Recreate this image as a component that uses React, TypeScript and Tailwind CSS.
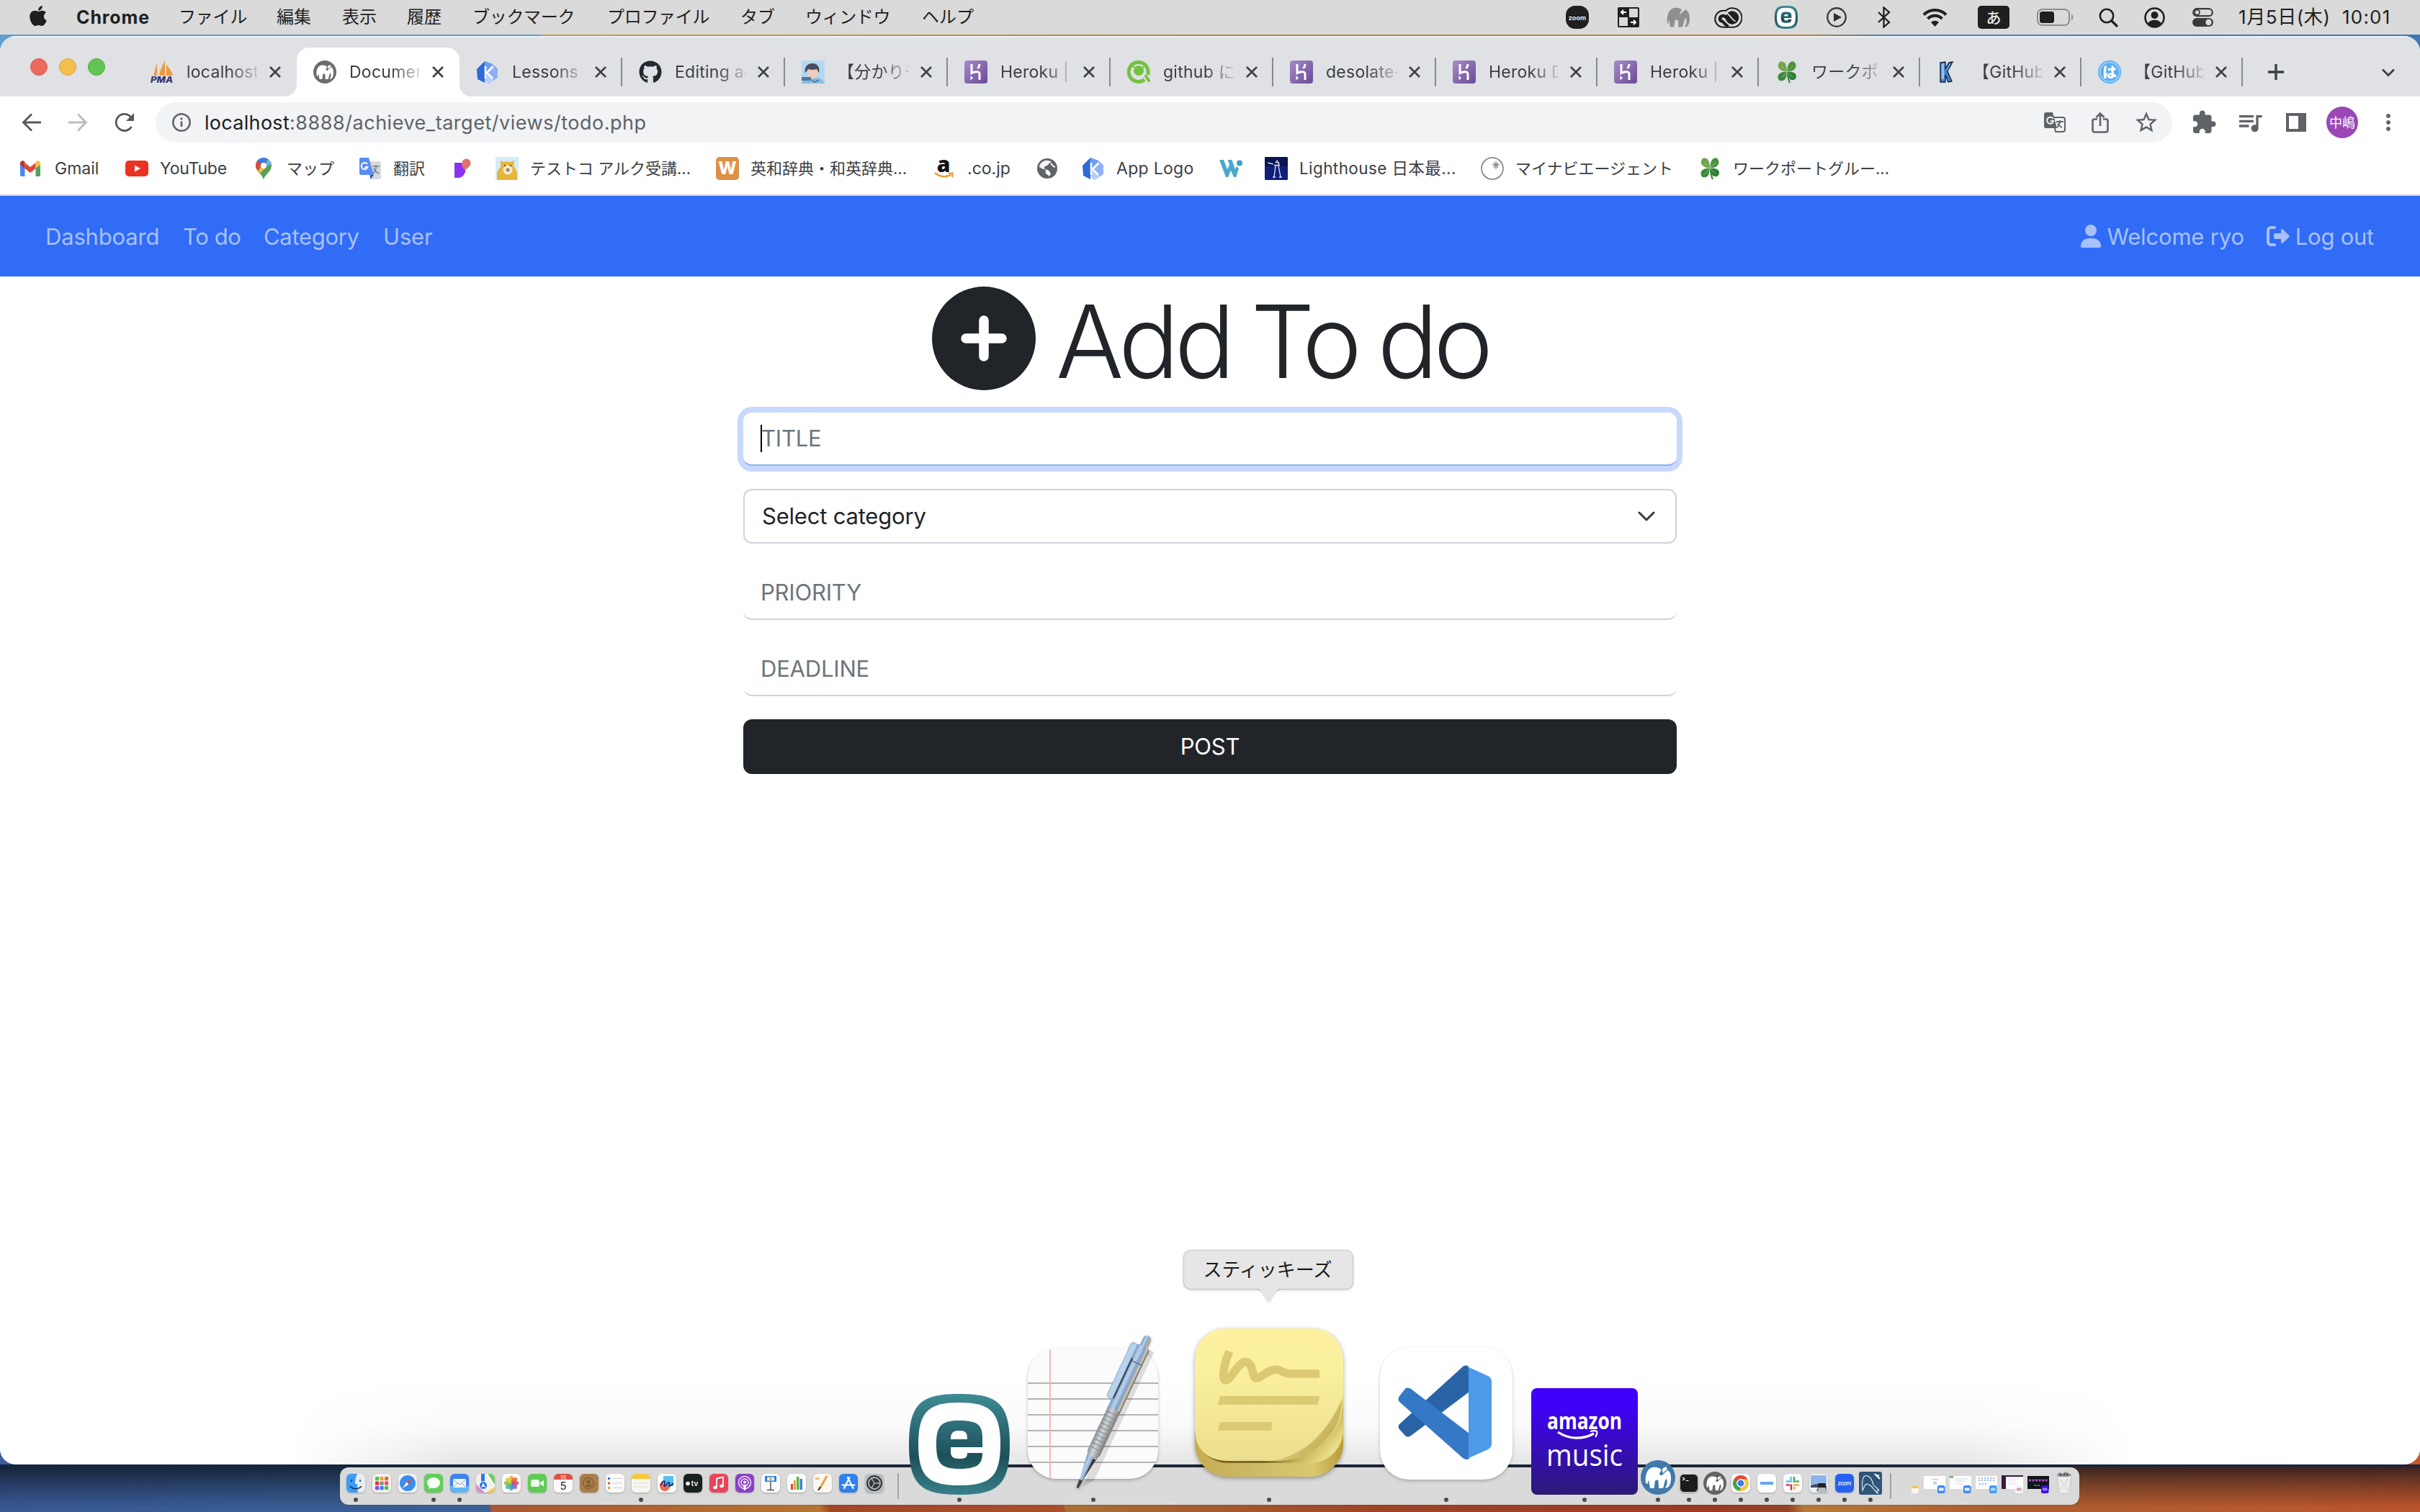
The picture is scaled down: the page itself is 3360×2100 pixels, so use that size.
import React from "react";
import { FaApple, FaGithub } from "react-icons/fa";
import { MdExtension, MdQueueMusic, MdStarBorder, MdMoreVert } from "react-icons/md";

type Box = { className?: string };

/* ---------- brand and site glyphs ---------- */

const Heroku = ({ className = "size-8" }: Box) => (
  <svg viewBox="0 0 32 32" className={className}>
    <defs>
      <linearGradient id="hk" x1="0" y1="0" x2="1" y2="1">
        <stop offset="0" stopColor="#a78cc7" />
        <stop offset="1" stopColor="#6a4a97" />
      </linearGradient>
    </defs>
    <rect width="32" height="32" rx="4" fill="url(#hk)" />
    <path d="M10 5v12.500c3-1.500 11-3.500 11 1V27M21 5c0 2.500-1 4.500-2.500 6" fill="none" stroke="#fff" strokeWidth="3" />
    <path d="M8.500 21v6.500l3.500-3.200z" fill="#fff" />
  </svg>
);

const KLogo = ({ className = "size-8" }: Box) => (
  <svg viewBox="0 0 32 32" className={className}>
    <path d="M12 1v30L2 26 1 12z" fill="#2f6bd6" />
    <path d="M12 1l11 4 7 6v13L17 32l-5-6z" fill="#8fb0f6" />
    <path d="M12 1l11 4-9 10z" fill="#6f9aef" />
    <path d="M12 26l5 6 8-4-9-10z" fill="#b6ccfb" />
    <path d="M13 8v17M23.500 8.500L15 17l8 8" stroke="#fff" strokeWidth="2.600" fill="none" />
  </svg>
);

const Elephant = ({ className, fill = "#fff" }: Box & { fill?: string }) => (
  <svg viewBox="0 0 32 28" className={className}>
    <path
      d="M1 23C-.5 12 3 1.500 12 .8c4-.3 7 .7 9 2.700l-2.500 4c-1 2 .5 3.500 2.500 4l6-7.500c3 1.500 5 6 5 11 0 6-1.500 11-5 12.500-1 .3-2-.5-1.500-1.500 2-2 2.500-5 2-9-.5-2-2-2-2.500 0L22 27.500h-5.500L16 19c-.5-2-3.500-2-4.500 0L10 27.500H5L3.500 18c-1 1-1.500 3-1 5z"
      fill={fill}
    />
    <path d="M19.500 8.500L27 3l1.500 4-7 5c-2 0-3-1.500-2-3.500z" fill={fill} />
  </svg>
);

const Mamp = ({ className = "size-8", color = "#6d6d6d" }: Box & { color?: string }) => (
  <svg viewBox="0 0 48 48" className={className}>
    <circle cx="24" cy="24" r="24" fill={color} />
    <g transform="translate(6 9)">
      <path
        d="M1 23C-.5 12 3 1.500 12 .8c4-.3 8 .7 11 3.700l-2.500 4c-1 2 .5 3.500 2.500 4l8-7.500c4 1.500 5 6 5 11 0 6-1.500 12-6 13.500-1 .3-2-.5-1.500-1.500 2-2 2.500-5 2-9-.5-2-2-2-2.500 0L25 30h-6l-.5-10c-.5-2-3.500-2-4.500 0L12.500 30H7L5 19c-1 1-1.500 3-1 5z"
        fill="#fff"
      />
      <path d="M24 3l5-3 2 3.500-6.500 5.500z" fill="#fff" />
    </g>
  </svg>
);

const Clover = ({ className = "size-8" }: Box) => (
  <svg viewBox="0 0 32 32" className={className}>
    <path d="M17 16q0 9 3 15" stroke="#3f8a3d" strokeWidth="2.200" fill="none" />
    <path d="M16 15.500C9 15 3 12 4 6c1-4 4-6 6-4 4 0 6 6 6 13.500z" fill="#6fa548" />
    <path d="M16.500 15.500c0-7 1-12 6-14 3-1 6 2 6 6 0 5-6 8-12 8z" fill="#4c9142" />
    <path d="M15.500 16c-6-1-12 2-12 7 0 4 3 6 6 5 5 0 6-6 6-12z" fill="#3c8a3f" />
    <path d="M17 16c6-1 12 1 12 6 0 4-4 6-6 5-4 0-6-5-6-11z" fill="#2f7d3a" />
    <path d="M8 7l8 9 9-9M9 24l7-8 8 7" stroke="#8fc070" strokeWidth="0.900" fill="none" />
  </svg>
);

const PmaLogo = () => (
  <svg viewBox="0 0 32 32" className="size-8">
    <path d="M9 3L4 21h5zM20 0c-4 8-7 14-8 21h8zM22 6v15h9C29 15 26 10 22 6z" fill="#f0993a" />
    <text x="0" y="31" fontSize="11.500" fontWeight="800" fontStyle="italic" fill="#34346a" textLength="31" lengthAdjust="spacingAndGlyphs" fontFamily="Inter, sans-serif">PMA</text>
  </svg>
);

const Avatar = () => (
  <svg viewBox="0 0 32 32" className="size-8">
    <rect width="32" height="32" fill="#b3d9f0" />
    <path d="M0 32c1-5 5-7 10-8h12c5 1 8 4 10 8z" fill="#8dbbe0" />
    <path d="M9 13h13v9c-3 4-10 4-13 0z" fill="#eccdbb" />
    <path d="M5 17C3 8 9 4 15 4s11 4 9 13l-3-5c-3 1-9 1-12 0-1 2-2 3-4 5z" fill="#4b4c5c" />
    <rect x="0" y="23" width="13" height="5" fill="#4f789c" />
    <path d="M14 27l4 3 6-3" stroke="#4a6d90" strokeWidth="1.500" fill="none" />
  </svg>
);

const Qiita = () => (
  <svg viewBox="0 0 32 32" className="size-8">
    <path d="M24 26.500A13.500 13.500 0 1 1 28.500 20" fill="none" stroke="#74c13f" strokeWidth="5" />
    <circle cx="16" cy="14" r="7" fill="#74c13f" />
    <path d="M8 8l4 3M24 8l-4 3" stroke="#74c13f" strokeWidth="2" fill="none" />
    <path d="M26 22l4 6" stroke="#74c13f" strokeWidth="4" strokeLinecap="round" />
  </svg>
);

const KBlue = () => (
  <svg viewBox="0 0 32 32" className="size-8">
    <path d="M5 3l7-1v9L17 3l5-1-7 13 6 14-5 1-4-10v10H5z" fill="#3f7fc8" stroke="#16233c" strokeWidth="1.400" />
    <path d="M7 5l3-.5V26l-3-1zM18 5l-4 9" fill="#8fc0ee" stroke="#8fc0ee" />
  </svg>
);

const Hatena = () => (
  <svg viewBox="0 0 32 32" className="size-8">
    <circle cx="16" cy="16" r="16" fill="#58aef6" />
    <circle cx="16" cy="16" r="13.500" fill="none" stroke="#a9d6fb" strokeWidth="1.500" />
    <text x="16" y="23.500" fontSize="20" fontWeight="900" textAnchor="middle" fill="#fff" fontFamily='"Noto Sans CJK JP", sans-serif'>は</text>
  </svg>
);

const ESet = ({ className, dark = "#1b454c" }: Box & { dark?: string }) => (
  <svg viewBox="0 0 140 140" className={className}>
    <defs>
      <linearGradient id="es" x1="0" y1="0" x2="0" y2="140" gradientUnits="userSpaceOnUse">
        <stop offset="0" stopColor="#3f8b95" />
        <stop offset="0.620" stopColor={dark} />
        <stop offset="1" stopColor="#37808a" />
      </linearGradient>
    </defs>
    <path d="M70 0c52 0 70 12 70 70s-18 70-70 70S0 128 0 70 18 0 70 0z" fill="url(#es)" />
    <path d="M70 12c42 0 57 12 57 58s-15 57-57 57-57-11-57-57 15-58 57-58z" fill="#fff" />
    <path d="M102 74V60c0-17-7-23-32-23S38 44 38 70s6 34 32 34c25 0 32-6 32-22H81c0 6-2 8-11 8s-12-3-12-10v-6zM58 63c0-9 3-12 12-12s11 3 11 12z" fill="url(#es)" fillRule="evenodd" />
  </svg>
);

/* ---------- menu bar ---------- */

const menus: [string, string][] = [
  ["ファイル", "w-[136px] tracking-[-0.2px]"],
  ["編集", "w-[91px]"],
  ["表示", "w-[90px]"],
  ["履歴", "w-[91px]"],
  ["ブックマーク", "w-[187px] tracking-[-0.3px]"],
  ["プロファイル", "w-[185px] tracking-[-0.3px]"],
  ["タブ", "w-[90px]"],
  ["ウィンドウ", "w-[162px] tracking-[-0.4px]"],
  ["ヘルプ", "w-[90px]"],
];

const MenuBar = () => (
  <header className="flex h-12 shrink-0 items-center bg-[#dadada] pl-10 text-[24px] leading-none text-[#1f1f1f]">
    <div className="w-[66px]">
      <FaApple className="size-8 -translate-x-[3px] -translate-y-0.5" />
    </div>
    <span className="w-[142px] text-[25px] font-bold tracking-[0.9px]">Chrome</span>
    {menus.map(([t, c]) => (
      <span key={t} className={c}>{t}</span>
    ))}
    <div className="ml-auto flex w-[1186px] shrink-0 items-center">
      <span className="flex size-8 items-center justify-center rounded-[13px] bg-[#1f1f1f] text-[9px] font-semibold tracking-[0.1px] text-white">zoom</span>
      <svg viewBox="0 0 30 28" className="ml-10 h-7 w-[30px]">
        <rect width="30" height="28" rx="2" fill="#1f1f1f" />
        <path d="M16 2h12v12H16zM2 14h12v12H2z" fill="#dadada" />
        <path d="M12 7H5m3-3L5 7l3 3M18 21h7m-3-3l3 3-3 3" stroke="#fff" strokeWidth="2" fill="none" />
      </svg>
      <Elephant className="ml-[38px] h-7 w-8" fill="#8f8f8f" />
      <svg viewBox="0 0 39 29" className="ml-[34px] h-[29px] w-[39px]">
        <path d="M12.500 27.800A11.500 11.500 0 0 1 13 4.800c1-.1 2 0 3 .2A13.300 13.300 0 1 1 27 27.800z" fill="none" stroke="#1f1f1f" strokeWidth="2" />
        <circle cx="25" cy="14.500" r="9.300" fill="#1f1f1f" />
        <path d="M19.500 27c-4-3-5-5-6.500-6.500-1.500-1.500-3-1-4-2-2-2-1-6.500 3.500-6.500 5 0 6.500 7 14 10" fill="none" stroke="#1f1f1f" strokeWidth="4.600" />
        <path d="M14.500 7.500c6-.5 9 9.500 15 12" fill="none" stroke="#dadada" strokeWidth="1.800" />
        <path d="M12 17c4 1 6 8 13 9" fill="none" stroke="#dadada" strokeWidth="1.600" />
      </svg>
      <ESet className="ml-[45px] size-8" dark="#1d5059" />
      <svg viewBox="0 0 28 28" className="ml-10 size-7">
        <circle cx="14" cy="14" r="12.700" fill="none" stroke="#3b3b3b" strokeWidth="2.400" />
        <path d="M10 8l11 6-11 6z" fill="#2f2f2f" />
      </svg>
      <svg viewBox="0 0 18 30" className="ml-[43px] h-[30px] w-[18px]">
        <path d="M1 8l15 14-7.500 6.500v-27L16 8 1 22" fill="none" stroke="#1f1f1f" strokeWidth="2.300" />
      </svg>
      <svg viewBox="0 0 35 26" className="ml-11 h-[26px] w-[35px]">
        <path d="M2 9.500a22 22 0 0 1 31 0M7.500 15a14 14 0 0 1 20 0" fill="none" stroke="#1f1f1f" strokeWidth="4" />
        <path d="M17.500 26l-5.500-6a8 8 0 0 1 11 0z" fill="#1f1f1f" />
      </svg>
      <span className="ml-[42px] flex h-8 w-11 items-center justify-center rounded-[5px] bg-[#1f1f1f] text-[21px] font-medium text-[#e6e6e6]">あ</span>
      <svg viewBox="0 0 51 24" className="ml-[38px] h-6 w-[51px]">
        <rect x="1" y="1" width="44" height="22" rx="6.500" fill="none" stroke="#8d8d8d" strokeWidth="2" />
        <rect x="4" y="4" width="20" height="16" rx="3.500" fill="#1f1f1f" />
        <path d="M48 8c3 1 3 7 0 8z" fill="#8d8d8d" />
      </svg>
      <svg viewBox="0 0 27 27" className="ml-[35px] size-[27px]">
        <circle cx="11" cy="11" r="9.200" fill="none" stroke="#1f1f1f" strokeWidth="2.600" />
        <path d="M18 18l7 7" stroke="#1f1f1f" strokeWidth="3.200" strokeLinecap="round" />
      </svg>
      <svg viewBox="0 0 29 29" className="ml-9 size-[29px]">
        <circle cx="14.500" cy="14.500" r="13" fill="none" stroke="#1f1f1f" strokeWidth="2.600" />
        <circle cx="14.500" cy="11" r="5" fill="#1f1f1f" />
        <path d="M5 23c3-7 16-7 19 0-5 6-14 6-19 0z" fill="#1f1f1f" />
      </svg>
      <svg viewBox="0 0 29 26" className="ml-[38px] h-[26px] w-[29px]">
        <rect x="1.200" y="1.200" width="26.600" height="10" rx="5" fill="none" stroke="#3b3b3b" strokeWidth="2.200" />
        <circle cx="6.500" cy="6.200" r="3.500" fill="none" stroke="#3b3b3b" strokeWidth="1.800" />
        <rect y="14" width="29" height="12" rx="6" fill="#3b3b3b" />
        <circle cx="22.500" cy="20" r="4.200" fill="#dadada" />
      </svg>
      <span className="ml-[35px] w-[144px] whitespace-nowrap text-[26px] tracking-[0.600px]">1月5日(木)</span>
      <span className="whitespace-nowrap text-[26px] tracking-[1.200px]">10:01</span>
    </div>
  </header>
);

/* ---------- tab strip ---------- */

const Close = () => (
  <svg viewBox="0 0 18 18" className="size-[18px] shrink-0">
    <path d="M2 2l14 14M16 2L2 16" stroke="#3c4043" strokeWidth="2.600" />
  </svg>
);

type Tab = { title: string; icon: React.ReactNode; wide?: boolean; line?: boolean; active?: boolean };

const tabs: Tab[] = [
  { title: "localhost:8", icon: <PmaLogo />, wide: true },
  { title: "Document", icon: <Mamp />, wide: true, active: true },
  { title: "Lessons |", icon: <KLogo />, wide: true, line: true },
  { title: "Editing ac", icon: <FaGithub className="size-8 text-[#24292f]" />, wide: true, line: true },
  { title: "【分かりやす", icon: <Avatar />, wide: true, line: true },
  { title: "Heroku | L", icon: <Heroku />, wide: true, line: true },
  { title: "github にプ", icon: <Qiita />, wide: true, line: true },
  { title: "desolate-", icon: <Heroku />, wide: true, line: true },
  { title: "Heroku De", icon: <Heroku />, line: true },
  { title: "Heroku | L", icon: <Heroku />, line: true },
  { title: "ワークポート", icon: <Clover />, line: true },
  { title: "【GitHub入", icon: <KBlue />, line: true },
  { title: "【GitHub入", icon: <Hatena />, line: true },
];

const TabItem = ({ t }: { t: Tab }) => (
  <div
    className={
      (t.wide ? "w-[226px] " : "w-[224px] ") +
      "relative flex shrink-0 items-center pl-[23px] " +
      (t.active ? "rounded-t-[18px] bg-white" : "")
    }
  >
    {t.active && (
      <>
        <span className="absolute bottom-0 -left-4 size-4 bg-[radial-gradient(circle_at_0_0,transparent_15.500px,#fff_16px)]" />
        <span className="absolute bottom-0 -right-4 size-4 bg-[radial-gradient(circle_at_100%_0,transparent_15.500px,#fff_16px)]" />
      </>
    )}
    <span className="flex size-8 shrink-0 items-center">{t.icon}</span>
    <span
      className={
        (t.wide ? "w-[98px] " : "w-[96px] ") +
        "ml-[18px] overflow-hidden whitespace-nowrap text-[23px] leading-8 tracking-[0.25px] text-[#3c4043] [mask-image:linear-gradient(to_right,#000_60%,transparent_108%)]"
      }
    >
      {t.title}
    </span>
    <span className="ml-4 flex">
      <Close />
    </span>
    {t.line && <span className="ml-auto h-10 w-0.5 bg-[#868b90]" />}
  </div>
);

const TabStrip = () => (
  <div className="flex h-[84px] shrink-0 bg-[#dfe1e5] pt-4 shadow-[inset_0_2px_0_#f0f1f3]">
    <div className="flex w-[186px] shrink-0 gap-4 pl-[42px] pt-[15px]">
      <span className="size-6 rounded-full border border-[#d35a50] bg-[#ec6a5e]" />
      <span className="size-6 rounded-full border border-[#d9a33f] bg-[#f4bf4f]" />
      <span className="size-6 rounded-full border border-[#50a73f] bg-[#61c554]" />
    </div>
    {tabs.map((t, i) => (
      <TabItem key={i} t={t} />
    ))}
    <svg viewBox="0 0 24 24" className="ml-[34px] mt-[22px] size-6">
      <path d="M12 1v22M1 12h22" stroke="#3c4043" strokeWidth="3.400" />
    </svg>
    <svg viewBox="0 0 20 12" className="ml-auto mr-[34px] mt-[29px] h-3 w-5">
      <path d="M2 1.500l8 8 8-8" fill="none" stroke="#3c4043" strokeWidth="2.800" />
    </svg>
  </div>
);

/* ---------- toolbar ---------- */

const Toolbar = () => (
  <div className="flex h-[72px] shrink-0 items-center bg-white text-[#5f6368]">
    <svg viewBox="0 0 28 26" className="ml-[30px] h-[26px] w-7">
      <path d="M27 13H3M14 1.500L2.500 13 14 24.500" fill="none" stroke="#55585c" strokeWidth="2.800" />
    </svg>
    <svg viewBox="0 0 28 26" className="ml-9 h-[26px] w-7">
      <path d="M1 13h24M14 1.500L25.500 13 14 24.500" fill="none" stroke="#babcbe" strokeWidth="2.800" />
    </svg>
    <svg viewBox="0 0 28 28" className="ml-[37px] size-7">
      <path d="M23.500 20A11.500 11.500 0 1 1 22 6l3 3" fill="none" stroke="#55585c" strokeWidth="2.800" />
      <path d="M27 1v11H16z" fill="#55585c" />
    </svg>
    <div className="ml-[29px] flex h-14 w-[2800px] items-center rounded-full bg-[#f1f3f4] pl-[23px]">
      <svg viewBox="0 0 26 26" className="size-[26px]">
        <circle cx="13" cy="13" r="11.700" fill="none" stroke="#5f6368" strokeWidth="2.500" />
        <path d="M13 11.500v7.500M13 6.500v3" stroke="#5f6368" strokeWidth="2.700" />
      </svg>
      <span className="ml-[19px] text-[27px] leading-none tracking-[0.3px] text-[#202124]">
        localhost<span className="tracking-[0.520px] text-[#5f6368]">:8888/achieve_target/views/todo.php</span>
      </span>
      <svg viewBox="0 0 30 28" className="ml-auto h-7 w-[30px]">
        <path d="M12 7h14a3 3 0 0 1 3 3v14a3 3 0 0 1-3 3H16z" fill="none" stroke="#5f6368" strokeWidth="2" />
        <path d="M3 0h9l6 22H3a3 3 0 0 1-3-3V3a3 3 0 0 1 3-3z" fill="#5f6368" />
        <path d="M12.500 9A4.500 4.500 0 1 0 13 12H9" fill="none" stroke="#f1f3f4" strokeWidth="2" />
        <path d="M17 13h10M22 11v2c0 4-2 6-4 8M19 15c1 3 4 5 6 6" fill="none" stroke="#5f6368" strokeWidth="1.800" />
      </svg>
      <svg viewBox="0 0 24 30" className="ml-[36px] h-[30px] w-6">
        <path d="M8 10.500H4a2.500 2.500 0 0 0-2.500 2.500v13A2.500 2.500 0 0 0 4 28.500h16a2.500 2.500 0 0 0 2.500-2.500V13a2.500 2.500 0 0 0-2.500-2.500h-4M12 20V3M6.500 8L12 2.500 17.500 8" fill="none" stroke="#5f6368" strokeWidth="2.600" />
      </svg>
      <MdStarBorder className="ml-[34px] mr-[18px] size-9" />
    </div>
    <MdExtension className="ml-[26px] size-9" />
    <MdQueueMusic className="ml-[26px] size-10" />
    <svg viewBox="0 0 28 26" className="ml-[30px] h-[26px] w-7">
      <path d="M0 0h28v26H0zM4 4v18h13V4z" fill="#5f6368" fillRule="evenodd" />
    </svg>
    <span className="ml-[28px] flex size-11 items-center justify-center rounded-full bg-[#9b47b5] text-[18px] text-white">中嶋</span>
    <MdMoreVert className="ml-6 size-9" />
  </div>
);

/* ---------- bookmarks ---------- */

const GmailMark = () => (
  <svg viewBox="0 0 28 22" className="h-[22px] w-7">
    <path d="M0 4v16a2 2 0 0 0 2 2h4.500V9z" fill="#4d87ee" />
    <path d="M28 4v16a2 2 0 0 1-2 2h-4.500V9z" fill="#4fa558" />
    <path d="M6.500 3L14 9l7.500-6v8L14 17l-7.500-6z" fill="#dc4a3d" />
    <path d="M0 4c0-4 4-5 6.500-2.500V11L0 6z" fill="#b3362c" />
    <path d="M28 4c0-4-4-5-6.500-2.500V11L28 6z" fill="#f3bf42" />
  </svg>
);

const YouTubeMark = () => (
  <svg viewBox="0 0 32 22" className="h-[22px] w-8">
    <rect width="32" height="22" rx="5" fill="#e93323" />
    <path d="M13 6.500v9l8-4.500z" fill="#fff" />
  </svg>
);

const MapPin = () => (
  <svg viewBox="0 0 22 31" className="mx-[5px] h-[31px] w-[22px]">
    <path d="M11 31C10 23 0 20 0 11a11 11 0 0 1 22 0c0 9-10 12-11 20z" fill="#54a35b" />
    <path d="M3 18C1 16 0 14 0 11c0-3 1-5 2.500-7L9 8z" fill="#dc4b3e" />
    <path d="M2.500 4A11 11 0 0 1 17 2L9 11z" fill="#4379e4" />
    <path d="M17 2a11 11 0 0 1 5 7l-8 3z" fill="#78b0f5" />
    <path d="M3 18l9-9 2 5-8 8z" fill="#f4bd45" />
    <circle cx="11" cy="11" r="4" fill="#fff" />
  </svg>
);

const TranslateMark = () => (
  <svg viewBox="0 0 32 32" className="size-8">
    <path d="M13 6h16a2 2 0 0 1 2 2v21a2 2 0 0 1-2 2H18z" fill="#d6d8db" />
    <path d="M19 13h10M24 11v3c0 4-2 7-4 9M21 16c1 3 5 6 7 7" stroke="#7b8794" strokeWidth="1.700" fill="none" />
    <path d="M3 1h11l7 24H3a2 2 0 0 1-2-2V3a2 2 0 0 1 2-2z" fill="#5b8def" />
    <path d="M16 31l5-6h-5z" fill="#2f4fb0" />
    <path d="M12 10A4.500 4.500 0 1 0 12.500 14H8.500" stroke="#fff" strokeWidth="2" fill="none" />
  </svg>
);

const PurpleMark = () => (
  <svg viewBox="0 0 24 28" className="ml-[5px] h-7 w-6">
    <path d="M0 6h9c6 3 8 10 5 15-2 4-5 6-9 6H0z" fill="#8a32f2" />
    <circle cx="16.500" cy="6.500" r="6" fill="#e0736c" />
    <path d="M10.500 7c0 5 2 8 4 9 4-2 7-5 8-9z" fill="#e0736c" />
  </svg>
);

const BearMark = () => (
  <svg viewBox="0 0 32 32" className="size-8">
    <rect width="32" height="32" fill="#d5ecf8" />
    <path d="M2 32V22c2-4 3-6 5-8L7 5l5 2c3-1 6-1 9 0l5-2-1 8c3 3 4 6 5 10v9z" fill="#e6b53a" />
    <circle cx="17" cy="18" r="6.500" fill="#f1ead4" />
    <circle cx="17" cy="18" r="2.500" fill="#a9885a" />
    <path d="M12 12h2M20 12h2" stroke="#6b4a14" strokeWidth="2" />
  </svg>
);

const WeblioMark = () => (
  <span className="flex size-8 items-center justify-center rounded-[5px] bg-[#de9145] text-[24px] font-extrabold leading-none text-white">W</span>
);

const AmazonMark = () => (
  <svg viewBox="0 0 28 30" className="ml-0.5 h-[30px] w-7">
    <text x="13" y="20" fontSize="30" fontWeight="900" textAnchor="middle" fill="#111" fontFamily='"Noto Sans", sans-serif'>a</text>
    <path d="M1 21c7 6 16 7 23 2" fill="none" stroke="#f09c38" strokeWidth="2.600" />
    <path d="M20 21.500h6l-1 6" fill="none" stroke="#f09c38" strokeWidth="2" />
  </svg>
);

const GlobeMark = () => (
  <svg viewBox="0 0 28 28" className="ml-0.5 size-7">
    <circle cx="14" cy="14" r="14" fill="#5f6368" />
    <path d="M3 12c4 2 4 3 7 3 3 1 1 4 2 6s4 1 4 4c5-3 2-6 0-8-2-3-6 0-6-4 0-3 4-2 6-5 1-2 3-2 4-3-4-3-9-3-13 0-3 2-4 5-4 7z" fill="#f4f5f5" />
    <path d="M19 7c2 2 3 5 6 5" stroke="#f4f5f5" strokeWidth="2" fill="none" />
  </svg>
);

const WantedlyMark = () => (
  <svg viewBox="0 0 32 24" className="h-6 w-8">
    <path d="M0 0h6l5 13 3-6-2.500-7h6L22 13l2-4 3 3-4 12h-3l-4-9-4 9H9z" fill="#4aa9cb" />
    <circle cx="28" cy="4.500" r="4" fill="#3d9fc6" />
  </svg>
);

const LighthouseMark = () => (
  <svg viewBox="0 0 32 32" className="size-8">
    <rect width="32" height="32" rx="1.500" fill="#10207a" />
    <rect width="32" height="13" rx="1.500" fill="#0b1450" />
    <path d="M15 12l-2 16M19 12l3 16M13 11.500h8M14.500 7.500h5v4M17 4v3M11 28h4M20 28h4" fill="none" stroke="#dfe6ff" strokeWidth="1.300" />
    <path d="M4 8l8 2" stroke="#c6d0ff" strokeWidth="1.300" />
  </svg>
);

const MynaviMark = () => (
  <svg viewBox="0 0 32 32" className="size-8">
    <circle cx="16" cy="16" r="15" fill="#fff" stroke="#77797c" strokeWidth="1.500" />
    <path d="M21 6v11M16 11h10M18 8l6 7M24 8l-6 7" stroke="#8a8c90" strokeWidth="1.300" />
  </svg>
);

const bookmarks: [React.ReactNode, string, string][] = [
  [<GmailMark />, "Gmail", "w-[146px] text-[23px]"],
  [<YouTubeMark />, "YouTube", "w-[176px] text-[23px] tracking-[-0.2px]"],
  [<MapPin />, "マップ", "w-[148px] text-[22px]"],
  [<TranslateMark />, "翻訳", "w-[128px] text-[22px]"],
  [<PurpleMark />, "", "w-[62px] text-[22px]"],
  [<BearMark />, "テストコ アルク受講...", "w-[306px] text-[22px]"],
  [<WeblioMark />, "英和辞典・和英辞典...", "w-[301px] text-[22px]"],
  [<AmazonMark />, ".co.jp", "w-[143px] text-[23px]"],
  [<GlobeMark />, "", "w-[64px] text-[22px]"],
  [<KLogo />, "App Logo", "w-[191px] text-[23px] tracking-[0.3px]"],
  [<WantedlyMark />, "", "w-[63px] text-[22px]"],
  [<LighthouseMark />, "Lighthouse 日本最...", "w-[300px] text-[22.500px] tracking-[0.4px]"],
  [<MynaviMark />, "マイナビエージェント", "w-[302px] text-[22px]"],
  [<Clover />, "ワークポートグルー...", "w-[270px] text-[22px]"],
];

const Bookmarks = () => (
  <div className="flex h-16 shrink-0 items-center bg-white pb-2 pl-7 text-[#3c4043]">
    {bookmarks.map(([icon, label, c], i) => (
      <div key={i} className={c + " flex shrink-0 items-center whitespace-nowrap leading-none"}>
        <span className="flex h-8 w-8 shrink-0 items-center">{icon}</span>
        <span className="ml-4">{label}</span>
      </div>
    ))}
  </div>
);

/* ---------- web page ---------- */

const Navbar = () => (
  <nav className="flex h-28 shrink-0 items-center bg-[#306cf5] px-16 text-[31px] leading-none tracking-[-0.18px] text-[#a8c0fc]">
    <span className="w-[190px] -translate-x-px">Dashboard</span>
    <span className="w-[112px] tracking-[-0.4px]">To do</span>
    <span className="w-[166px] tracking-[-0.3px]">Category</span>
    <span>User</span>
    <svg viewBox="0 0 28 32" className="ml-auto h-8 w-7">
      <circle cx="14" cy="8" r="8" fill="#a8c0fc" />
      <path d="M0 30c0-7 5-11 11-11h6c6 0 11 4 11 11 0 1-.8 2-2 2H2c-1.200 0-2-1-2-2z" fill="#a8c0fc" />
    </svg>
    <span className="ml-2">Welcome ryo</span>
    <svg viewBox="0 0 32 28" className="ml-[31px] h-7 w-8">
      <path d="M11 2H6a4 4 0 0 0-4 4v16a4 4 0 0 0 4 4h5" fill="none" stroke="#a8c0fc" strokeWidth="4" strokeLinecap="round" />
      <path d="M12 10h8V5.500c0-1.500 1.500-2 2.500-1l8.500 8.200c.8.800.8 1.900 0 2.700L22.500 23.500c-1 1-2.500.5-2.500-1V18h-8a2 2 0 0 1-2-2v-4a2 2 0 0 1 2-2z" fill="#a8c0fc" />
    </svg>
    <span className="ml-2 tracking-[-0.25px]">Log out</span>
  </nav>
);

const TodoForm = () => (
  <form className="mx-auto mt-[31px] flex w-[1296px] flex-col gap-8 text-[31px] leading-[48px] tracking-[-0.2px] text-[#6c757d]">
    <div className="flex h-[74px] items-center rounded-xl border-b-2 border-[#8bb0f9] bg-white pl-6 shadow-[0_0_0_8px_#c9d9fe]">
      <span className="h-[38px] w-0.5 bg-black" />
      <span className="-ml-px">TITLE</span>
    </div>
    <div className="flex h-[76px] items-center rounded-xl border-2 border-[#ced4da] bg-white pl-6 pr-7 tracking-[-0.2px] text-[#212529]">
      Select category
      <svg viewBox="0 0 24 14" className="ml-auto h-3.5 w-6">
        <path d="M2 2l10 10L22 2" fill="none" stroke="#343a40" strokeWidth="3" strokeLinecap="round" strokeLinejoin="round" />
      </svg>
    </div>
    <div className="flex h-[74px] items-center rounded-xl border-b-2 border-[#ced4da] bg-white pl-6">PRIORITY</div>
    <div className="flex h-[74px] items-center rounded-xl border-b-2 border-[#ced4da] bg-white pl-6">DEADLINE</div>
    <button type="button" className="h-[76px] rounded-xl bg-[#212529] text-white">POST</button>
  </form>
);

const Page = () => (
  <main className="flex grow flex-col bg-white">
    <Navbar />
    <div className="mt-3.5 flex h-[144px] justify-center text-[#212529]">
      <span className="flex size-36 items-center justify-center rounded-full bg-[#212529]">
        <svg viewBox="0 0 64 64" className="size-16">
          <path d="M32 7v50M7 32h50" stroke="#fff" strokeWidth="13.500" strokeLinecap="round" />
        </svg>
      </span>
      <h1 className="ml-7 w-[600px] whitespace-nowrap text-[140px] font-light leading-[152px] tracking-[-6.500px] [word-spacing:-5px]">Add To do</h1>
    </div>
    <TodoForm />
  </main>
);

/* ---------- dock ---------- */

const Tile = ({ children, bg = "#fbfbfb" }: { children?: React.ReactNode; bg?: string }) => (
  <svg viewBox="0 0 26 26" className="size-[26px] drop-shadow-[0_1px_1px_rgba(0,0,0,0.25)]">
    <rect width="26" height="26" rx="6" fill={bg} />
    {children}
  </svg>
);

const padColors = ["#5ac53a", "#f2a33a", "#f0692e", "#e0352e", "#8a8a8a", "#ef4a6b", "#8d45e8", "#3b7df0", "#45c24a"];
const petals = ["#f0a32f", "#e8602f", "#d0446f", "#9a58b8", "#4a8ad0", "#4ab6a0", "#7bbf45", "#d6cf3a"];

const smallApps: React.ReactNode[] = [
  <Tile bg="#e9eef4">
    <path d="M6 0h9c-2 4-3 9-3 14h3c0 4 .5 8 1 12H6a6 6 0 0 1-6-6V6a6 6 0 0 1 6-6z" fill="#3b9cf7" />
    <path d="M7 8v3M19 8v3M5 17c4 5 12 5 16 0" fill="none" stroke="#1c2f4c" strokeWidth="1.500" />
  </Tile>,
  <Tile bg="#f1f1f1">
    {padColors.map((c, i) => (
      <rect key={i} x={4 + (i % 3) * 6.500} y={4 + Math.floor(i / 3) * 6.500} width="5.200" height="5.200" rx="1" fill={c} />
    ))}
  </Tile>,
  <Tile bg="#f4f4f4">
    <circle cx="13" cy="13" r="11" fill="#3b8df0" />
    <path d="M20 6l-5.500 8.500-3-3z" fill="#e8432e" />
    <path d="M6 20l5.500-8.500 3 3z" fill="#fff" />
  </Tile>,
  <Tile bg="#62cf5b">
    <ellipse cx="13" cy="12.500" rx="9" ry="7.500" fill="#f6fff4" />
    <path d="M7 17l-1 4 5-2z" fill="#f6fff4" />
  </Tile>,
  <Tile bg="#3f83ef">
    <path d="M0 17h26v3a6 6 0 0 1-6 6H6a6 6 0 0 1-6-6z" fill="#5fb6f5" />
    <rect x="4" y="7" width="18" height="12" rx="1.500" fill="#f1f4f8" />
    <path d="M4.500 8l8.500 7 8.500-7M4.500 18.500L10 13M21.500 18.500L16 13" fill="none" stroke="#9aa5b4" strokeWidth="1" />
  </Tile>,
  <Tile bg="#f4f1ec">
    <path d="M14 0h6a6 6 0 0 1 6 6v12z" fill="#6fcb62" />
    <path d="M0 14l12 12H6a6 6 0 0 1-6-6z" fill="#d98fd0" />
    <path d="M14 26l12-8v2a6 6 0 0 1-6 6z" fill="#f2c84e" />
    <path d="M15 0l11 17" stroke="#fff" strokeWidth="2" />
    <path d="M7 0h5v14H7z" fill="#2f74e6" />
    <circle cx="10" cy="16" r="5.500" fill="#2f74e6" stroke="#fff" strokeWidth="1" />
    <path d="M10 12.500l3 6.500-3-1.500-3 1.500z" fill="#fff" />
  </Tile>,
  <Tile>
    {petals.map((c, i) => (
      <ellipse key={i} cx="13" cy="7.500" rx="3.200" ry="5" fill={c} fillOpacity="0.850" transform={`rotate(${i * 45} 13 13)`} />
    ))}
  </Tile>,
  <Tile bg="#5fcb55">
    <rect x="4" y="8" width="12" height="10" rx="2.500" fill="#eefaec" />
    <path d="M17 12l5-3.500v9L17 14z" fill="#eefaec" />
  </Tile>,
  <Tile>
    <path d="M0 8V6a6 6 0 0 1 6-6h14a6 6 0 0 1 6 6v2z" fill="#dd5046" />
    <text x="13" y="6.500" fontSize="6" textAnchor="middle" fill="#fff" fontFamily='Inter, "Noto Sans CJK JP", sans-serif'>1月</text>
    <text x="13" y="22" fontSize="15" textAnchor="middle" fill="#222" fontFamily="Inter, sans-serif">5</text>
  </Tile>,
  <Tile bg="#a87f4a">
    <circle cx="12" cy="13" r="7.500" fill="none" stroke="#86622f" strokeWidth="1.500" />
    <circle cx="12" cy="11" r="2.800" fill="#86622f" />
    <path d="M7.500 18c1-5 8-5 9 0z" fill="#86622f" />
    <path d="M25 9v3M25 17v3" stroke="#e67b35" strokeWidth="2" />
  </Tile>,
  <Tile>
    <circle cx="4.500" cy="6.500" r="1.800" fill="#3a73e0" />
    <circle cx="4.500" cy="13" r="1.800" fill="#e0564a" />
    <circle cx="4.500" cy="19.500" r="1.800" fill="#e6903c" />
    <path d="M9 6.500h14M9 13h14M9 19.500h14" stroke="#cfcfcf" strokeWidth="1" />
  </Tile>,
  <Tile bg="#f7f6f1">
    <path d="M0 7V6a6 6 0 0 1 6-6h14a6 6 0 0 1 6 6v1z" fill="#f6c83c" />
    <path d="M2 13h22M2 18h22" stroke="#dcdad2" strokeWidth="1" />
  </Tile>,
  <Tile>
    <circle cx="10" cy="17" r="7" fill="#ee6a4f" />
    <path d="M8 3h14v14c-6 1-12 0-14-4z" fill="#58bff0" />
    <path d="M4 16c3-6 5-7 6-5s-2 6 0 6 4-6 6-5-1 4 0 5 4-2 6-4" fill="none" stroke="#1d2d6b" strokeWidth="1.800" />
  </Tile>,
  <Tile bg="#17211f">
    <circle cx="6" cy="13.500" r="2.800" fill="#fff" />
    <text x="15.500" y="17" fontSize="10" fontWeight="600" textAnchor="middle" fill="#fff" fontFamily="Inter, sans-serif">tv</text>
  </Tile>,
  <Tile bg="#e9445a">
    <path d="M10 19V6.500l9-2V17" fill="none" stroke="#fff" strokeWidth="1.800" />
    <ellipse cx="8" cy="19" rx="2.800" ry="2.200" fill="#fff" />
    <ellipse cx="17" cy="17" rx="2.800" ry="2.200" fill="#fff" />
  </Tile>,
  <Tile bg="#8c3fc4">
    <circle cx="13" cy="12" r="8.500" fill="none" stroke="#f3e6fb" strokeWidth="1.500" />
    <circle cx="13" cy="12" r="5" fill="none" stroke="#f3e6fb" strokeWidth="1.500" />
    <circle cx="13" cy="11.500" r="2" fill="#fff" />
    <path d="M11 15h4l-1 8h-2z" fill="#fff" />
  </Tile>,
  <Tile>
    <rect x="5" y="3" width="16" height="8" rx="1" fill="#2f7de0" />
    <rect x="8" y="4.500" width="10" height="5" fill="#eaf3ff" />
    <circle cx="13" cy="7" r="2" fill="#f0a742" />
    <path d="M13 11v11M8 22.500h10" stroke="#4c5764" strokeWidth="1.500" />
  </Tile>,
  <Tile>
    <path d="M5 22v-8h3v8z" fill="#d8493e" />
    <path d="M9 22V9h3v13z" fill="#e9a23b" />
    <path d="M13 22V4h3.500v18z" fill="#58b947" />
    <path d="M17.500 22V7H21v15z" fill="#3c82e0" />
  </Tile>,
  <Tile bg="#fbf8f0">
    <path d="M19 3L9 21" stroke="#ee9a35" strokeWidth="2.600" />
    <path d="M10 18l-3 5" stroke="#333" strokeWidth="2" />
    <text x="2.500" y="13" fontSize="13" fontWeight="700" fill="#ee9a35" fontFamily="Liberation Serif, serif">“</text>
  </Tile>,
  <Tile bg="#2f80ec">
    <path d="M14.500 5L7 20M12 5l7.500 15M4.500 15.500h17" stroke="#fff" strokeWidth="2.200" strokeLinecap="round" />
  </Tile>,
  <Tile bg="#b9bfc4">
    <circle cx="13" cy="13" r="11" fill="#33373a" />
    <circle cx="13" cy="13" r="8" fill="none" stroke="#b4b8bb" strokeWidth="1.800" />
    <path d="M13 13L9 6M13 13h8M13 13l-4 7" stroke="#b4b8bb" strokeWidth="1.500" />
  </Tile>,
];
const runningSmall = [0, 3, 4, 11];

const TextEditIcon = () => (
  <svg viewBox="0 0 181 214" className="h-[214px] w-[181px] drop-shadow-[0_2px_2px_rgba(0,0,0,0.25)]">
    <defs>
      <clipPath id="tec"><rect y="19" width="181" height="181" rx="40" /></clipPath>
      <linearGradient id="pen" x1="0" y1="0" x2="1" y2="0">
        <stop offset="0" stopColor="#6f95c0" />
        <stop offset="0.350" stopColor="#bcd4ec" />
        <stop offset="0.650" stopColor="#7d9fc6" />
        <stop offset="0.850" stopColor="#d8c7ae" />
        <stop offset="1" stopColor="#5f5a55" />
      </linearGradient>
      <linearGradient id="grip" x1="0" y1="0" x2="1" y2="0">
        <stop offset="0" stopColor="#8b8f93" />
        <stop offset="0.400" stopColor="#cfd6dc" />
        <stop offset="1" stopColor="#7d7a76" />
      </linearGradient>
    </defs>
    <g clipPath="url(#tec)">
      <rect y="19" width="181" height="181" fill="#fbfbfb" />
      <path d="M0 67h181M0 89h181M0 111h181M0 133h181M0 155h181M0 177h181" stroke="#b3b3b6" strokeWidth="1.800" />
      <path d="M31 19v181" stroke="#f2b3ae" strokeWidth="1.800" />
    </g>
    <g transform="translate(166 4) rotate(25.100)">
      <path d="M1 14h16v196L6 226z" fill="#000" opacity="0.120" />
      <rect x="-5" y="-3" width="11" height="22" rx="5" fill="url(#pen)" />
      <rect x="-9" y="13" width="19" height="102" rx="4" fill="url(#pen)" />
      <path d="M-7 38h17" stroke="#4f6f95" strokeWidth="1.500" />
      <rect x="-17" y="14" width="9" height="84" rx="3" fill="#b9d2ec" stroke="#7f9fc2" strokeWidth="0.800" />
      <path d="M-7 34v62" stroke="#3d4d60" strokeWidth="2.400" />
      <path d="M-9 110h19v66l-3 8H-6l-3-8z" fill="url(#grip)" />
      <path d="M-9 116h19M-9 122h19M-9 128h19M-9 134h19M-9 140h19M-9 146h19M-9 152h19M-9 158h19M-9 164h19M-9 170h19" stroke="#84888c" strokeWidth="1" />
      <path d="M-7 182H8L3 218h-5z" fill="url(#pen)" />
      <path d="M3 184h4L3 216z" fill="#3b2d2d" />
      <path d="M-2 218h5l-1 12h-3z" fill="#3d4146" />
    </g>
  </svg>
);

const StickiesIcon = () => (
  <svg viewBox="0 0 206 206" className="size-[206px] drop-shadow-[0_2px_3px_rgba(0,0,0,0.35)]">
    <defs>
      <linearGradient id="st1" x1="0" y1="0" x2="0" y2="1">
        <stop offset="0" stopColor="#fdf1a0" />
        <stop offset="0.300" stopColor="#fbf09e" />
        <stop offset="1" stopColor="#ebdf8f" />
      </linearGradient>
      <linearGradient id="st2" x1="0" y1="0" x2="1" y2="0">
        <stop offset="0" stopColor="#c8ab4f" />
        <stop offset="0.350" stopColor="#cbb866" />
        <stop offset="0.800" stopColor="#d9c970" />
        <stop offset="1" stopColor="#b99b38" />
      </linearGradient>
      <linearGradient id="st3" x1="120" y1="110" x2="200" y2="180" gradientUnits="userSpaceOnUse">
        <stop offset="0.300" stopColor="#7c6820" />
        <stop offset="0.620" stopColor="#c9b65c" />
        <stop offset="0.900" stopColor="#eee08c" />
      </linearGradient>
      <linearGradient id="st4" x1="110" y1="100" x2="180" y2="160" gradientUnits="userSpaceOnUse">
        <stop offset="0.200" stopColor="#c9b65c" stopOpacity="0" />
        <stop offset="1" stopColor="#bfaa50" stopOpacity="0.900" />
      </linearGradient>
    </defs>
    <rect y="40" width="206" height="166" rx="46" fill="url(#st2)" />
    <rect y="20" width="206" height="167" rx="46" fill="url(#st3)" />
    <path d="M46 0h114c28 0 46 18 46 46v44c0 42-10 50-28 68-22 20-36 26-74 26H46C18 184 0 168 0 140V46C0 18 18 0 46 0z" fill="url(#st1)" />
    <path d="M205 96c-2 38-12 46-27 62-22 20-36 26-74 26 40-5 76-30 101-88z" fill="url(#st4)" />
    <path d="M48 32c-8 18-11 38-6 40 8 2 19-30 31-25 10 5 5 24 14 22 9-3 15-12 26-12 9 1 9 7 24 6h36" fill="none" stroke="#dcc973" strokeWidth="11.500" />
    <path d="M35 94h138l-2 12H32zM35 130h73l-2 12H32z" fill="#dcca74" />
  </svg>
);

const VsCodeIcon = () => (
  <svg viewBox="0 0 186 186" className="size-[186px] drop-shadow-[0_2px_2px_rgba(0,0,0,0.22)]">
    <rect x="1" y="2" width="184" height="184" rx="41" fill="#fff" />
    <path d="M124 29c-2-2-6-2-9 1L28 109c-2 2-2 5 0 7l8 9c2 2 5 2 8 0l81-61z" fill="#2963a6" />
    <path d="M28 70l8-10c2-2 5-2 8 0l81 62v35c-3 2-6 1-9-1L28 78c-2-2-2-5 0-8z" fill="#3478c6" />
    <path d="M120 28l31 14c3 2 5 4 5 7v87c0 4-2 6-5 8l-31 14c3 0 4-3 4-6V34c0-3-1-5-4-6z" fill="#4d9ae9" />
  </svg>
);

const AmazonMusicIcon = () => (
  <svg viewBox="0 0 148 148" className="size-[148px]">
    <defs>
      <linearGradient id="am" x1="0" y1="0" x2="0" y2="1">
        <stop offset="0.150" stopColor="#4000fa" />
        <stop offset="1" stopColor="#2b1a75" />
      </linearGradient>
    </defs>
    <rect width="148" height="148" rx="8" fill="url(#am)" />
    <g fill="#fff" fontFamily='"Open Sans", sans-serif'>
      <text x="22" y="57" fontSize="33" fontWeight="700" textLength="104" lengthAdjust="spacingAndGlyphs">amazon</text>
      <text x="21" y="108" fontSize="42" fontWeight="400" textLength="106" lengthAdjust="spacingAndGlyphs">music</text>
    </g>
    <path d="M37 61c15 10 34 11 50 2" fill="none" stroke="#fff" strokeWidth="3.200" />
    <path d="M82 60c4-1 8-1 9 0s0 5-2 8" fill="none" stroke="#fff" strokeWidth="2.200" />
  </svg>
);

const tailApps: React.ReactNode[] = [
  <Tile bg="#bfc3c4">
    <rect x="1" y="1" width="24" height="24" rx="5" fill="#1c1c1c" />
    <path d="M4 5l3 2-3 2M8.500 9.500h4" stroke="#fff" strokeWidth="1.200" fill="none" />
  </Tile>,
  <Mamp color="#636363" />,
  <Tile>
    <circle cx="13" cy="13" r="11" fill="#f5c543" />
    <path d="M3.500 7.500A11 11 0 0 1 22.500 7.500H13L8.500 15.500z" fill="#dc4a3c" />
    <path d="M3.500 7.500L13 18l-2 6A11 11 0 0 1 3.500 7.500z" fill="#44a153" />
    <circle cx="13" cy="13" r="5.200" fill="#3c7de8" stroke="#fff" strokeWidth="1.500" />
  </Tile>,
  <Tile bg="#fff">
    <rect x="4" y="11" width="18" height="4" fill="#62a7ea" />
  </Tile>,
  <Tile>
    <path d="M5 10.500h6M10.500 5v3" stroke="#5bc4ec" strokeWidth="2.600" strokeLinecap="round" />
    <path d="M15 5v6M18 10.500h3" stroke="#45ac74" strokeWidth="2.600" strokeLinecap="round" />
    <path d="M15 15.500h6M15.500 19v2" stroke="#e3b045" strokeWidth="2.600" strokeLinecap="round" />
    <path d="M11 15.500v6M5 15.500h3" stroke="#cf3660" strokeWidth="2.600" strokeLinecap="round" />
  </Tile>,
  <Tile bg="#eef1f5">
    <rect x="2" y="2" width="22" height="14" rx="2" fill="#8fb4ea" />
    <path d="M2 16l8-2 14 3v5a2 2 0 0 1-2 2H4a2 2 0 0 1-2-2z" fill="#3e4d66" />
    <path d="M2 19h10l-2 5H4a2 2 0 0 1-2-2z" fill="#eef1f5" />
    <rect x="12" y="13" width="11" height="6" rx="1.500" fill="#222" />
    <path d="M13 19h9l3 7H11z" fill="#b9bcc0" />
  </Tile>,
  <Tile bg="#2560f0">
    <text x="13" y="15.500" fontSize="8" fontWeight="500" textAnchor="middle" fill="#fff" textLength="19" fontFamily="Inter, sans-serif">zoom</text>
  </Tile>,
  <svg viewBox="0 0 32 32" className="size-8">
    <rect width="32" height="32" rx="3" fill="#2f5478" />
    <path d="M5 26C4 16 5 8 8 6c6-2 10 4 12 12 2 3 6 5 8 8l-3 0 1 4c-4-3-6-7-9-10-3-3-5-3-7-3-2 2-3 5-5 9z" fill="none" stroke="#dce8f2" strokeWidth="1.200" />
    <path d="M22 3l3 3 3-1M25 6l4 4" stroke="#fff" strokeWidth="2" fill="none" />
  </svg>,
];

const Dot = ({ on = true }: { on?: boolean }) => (
  <span className={"size-1.5 shrink-0 rounded-full " + (on ? "bg-[#4d4d4d]" : "")} />
);

const Thumb = ({ children, badge, x }: { children: React.ReactNode; badge: string; x?: string }) => (
  <svg viewBox="0 0 36 26" className="h-[26px] w-9">
    <g>{children}</g>
    <rect x="19" y="14" width="10.500" height="11" rx="2.500" fill={badge} />
    <rect x="21" y="17.500" width="6.500" height="4" rx="0.500" fill={x || "#f0f4f8"} />
  </svg>
);

const Dock = () => (
  <div className="absolute bottom-[10px] left-[472px] flex h-[52px] w-[2415px] items-end rounded-xl bg-[#dadada] pb-1 pl-1 shadow-[0_0_1px_rgba(0,0,0,0.4)]">
    {smallApps.map((icon, i) => (
      <div key={i} className="flex w-9 shrink-0 flex-col items-center gap-[7px]">
        {icon}
        <Dot on={runningSmall.includes(i)} />
      </div>
    ))}
    <span className="mb-1 ml-[14px] h-9 w-0.5 shrink-0 bg-[#a3a3a3]" />
    <div className="ml-[14px] flex shrink-0 flex-col items-center gap-1">
      <ESet className="size-[140px]" />
      <Dot />
    </div>
    <div className="ml-[25px] flex shrink-0 flex-col items-center gap-3">
      <TextEditIcon />
      <Dot />
    </div>
    <div className="ml-[51px] flex shrink-0 flex-col items-center gap-[29px]">
      <StickiesIcon />
      <Dot />
    </div>
    <div className="ml-[50px] flex shrink-0 flex-col items-center gap-[25px]">
      <VsCodeIcon />
      <Dot />
    </div>
    <div className="ml-[25px] flex shrink-0 flex-col items-center gap-1">
      <AmazonMusicIcon />
      <Dot />
    </div>
    <div className="ml-1 flex shrink-0 flex-col items-center gap-1">
      <Mamp className="size-12" color="#4179ab" />
      <Dot />
    </div>
    {tailApps.map((icon, i) => (
      <div key={i} className={"flex w-9 shrink-0 flex-col items-center " + (i === 1 || i === 7 ? "gap-1" : "gap-[7px]") + (i === 0 ? " ml-px" : "")}>
        {icon}
        <Dot />
      </div>
    ))}
    <span className="mb-1 ml-[9px] h-9 w-0.5 shrink-0 bg-[#a3a3a3]" />
    <div className="mb-[11px] ml-[9px] flex items-end">
      <svg viewBox="0 0 36 26" className="h-[26px] w-9">
        <rect x="19" y="15" width="10" height="10" rx="2.500" fill="#f8f7f2" />
        <path d="M19 18v-1a2 2 0 0 1 2-2h6a2 2 0 0 1 2 2v1z" fill="#f6c83c" />
      </svg>
      <Thumb badge="#3f8bf0">
        <rect y="1" width="30" height="18" fill="#fdfdfd" />
        <path d="M12 6h8M13 12h5" stroke="#999" strokeWidth="0.800" />
        <path d="M13 10h5" stroke="#4fb3b5" />
      </Thumb>
      <Thumb badge="#3f8bf0">
        <rect y="1" width="30" height="18" fill="#fdfdfd" />
        <rect y="1" width="5" height="2.500" fill="#63b153" />
        <path d="M8 5h16M8 8h12M8 12h10" stroke="#c5cbd3" strokeWidth="0.800" />
      </Thumb>
      <Thumb badge="#3d9df5" x="#bcd9f8">
        <rect y="1" width="30" height="18" fill="#fdfdfd" />
        <path d="M4 4h22M4 7h22M5 12h12" stroke="#7ba4e6" strokeWidth="1.500" strokeDasharray="2 2" />
      </Thumb>
      <Thumb badge="#f6f6f6" x="#d9a0a8">
        <rect y="1" width="30" height="18" fill="#fdfdfd" />
        <rect y="1" width="6" height="18" fill="#3c1740" />
        <path d="M0 1h30" stroke="#3c1740" strokeWidth="2" />
        <path d="M9 5h14M9 8h10M9 12h12" stroke="#d2d2d2" strokeWidth="0.800" />
      </Thumb>
      <Thumb badge="#3c0be0" x="#8f7ff0">
        <rect y="1" width="30" height="18" fill="#111318" />
        <path d="M2 7h26" stroke="#b14fc9" strokeWidth="3" strokeDasharray="3 1.500" />
        <path d="M9 14h8" stroke="#5d6f86" strokeWidth="2" strokeDasharray="2 1" />
      </Thumb>
      <svg viewBox="0 0 24 32" className="ml-[3px] h-8 w-6">
        <path d="M2 6h20l-3 24c-3 2-11 2-14 0z" fill="#ececec" stroke="#bdbdbd" strokeWidth="0.800" />
        <path d="M7 12l4 6-4 8M16 10l-3 9 4 8" stroke="#d0d0d0" strokeWidth="1" fill="none" />
        <path d="M2 5l4-3 4 2 4-3 4 2 4 2-3 3H4z" fill="#8b9099" />
        <path d="M6 4l2 2M12 3v3M17 4l-2 2" stroke="#2f3338" strokeWidth="1.500" />
      </svg>
    </div>
  </div>
);

const DockLabel = () => (
  <div className="absolute left-[1644px] top-[1737px] flex h-[53px] w-[234px] items-center justify-center rounded-[9px] bg-[#e6e6e6] text-[26px] leading-none text-[#1a1a1a] shadow-[0_0_2px_1px_rgba(0,0,0,0.22),0_2px_5px_rgba(0,0,0,0.12)]">
    <span className="-translate-x-px">スティッキーズ</span>
    <svg viewBox="0 0 36 19" className="absolute left-[100px] top-[52px] h-[19px] w-9 drop-shadow-[0_1px_1px_rgba(0,0,0,0.2)]">
      <path d="M0 0c6 1 7 3 14 15 2 4 5 4 7 0C28 3 30 1 36 0z" fill="#e6e6e6" />
    </svg>
  </div>
);

export default function App() {
  return (
    <div className='relative flex h-[2100px] w-[3360px] flex-col overflow-hidden bg-[linear-gradient(to_right,#5d9fcf_0px,#5d9fcf_751px,#c0a348_751px,#b48a38_1700px,#b8873a_2500px,#4a7fb5_2620px,#3f78b5_3360px)] font-[Inter,"Noto_Sans_CJK_JP",sans-serif] font-normal'>
      <div className="absolute bottom-0 left-0 h-[100px] w-full bg-[linear-gradient(75deg,#3a5c99_0px,#3c659c_658px,#b25a33_660px,#bf7a33_1100px,#a84a28_1115px,#b0542b_1428px,#b27637_1430px,#a84626_1850px,#a33c23_2300px,#9f4826_2400px,#c0803a_2420px,#b86431_2650px,#c5582c_3270px)]" />
      <MenuBar />
      <div className="relative mt-0.5 flex h-[1984px] shrink-0 flex-col overflow-hidden rounded-[22px] bg-white">
        <TabStrip />
        <Toolbar />
        <Bookmarks />
        <div className="h-0.5 shrink-0 bg-[#d9dcdf]" />
        <Page />
        <div className="pointer-events-none absolute bottom-0 left-[400px] h-[120px] w-[2560px] bg-[linear-gradient(to_bottom,transparent,rgba(0,0,0,0.02)_55%,rgba(0,0,0,0.1))] [mask-image:linear-gradient(to_right,transparent,rgba(0,0,0,0.4)_100px,#000_240px,#000_2320px,rgba(0,0,0,0.4)_2460px,transparent)]" />
      </div>
      <div className="relative h-[66px] shrink-0 bg-[linear-gradient(to_bottom,#0c2340_0px,#14273f_2px,rgba(10,14,24,0.72)_4px,rgba(10,14,24,0.4)_28px,rgba(10,14,24,0.05)_60px)]" />
      <Dock />
      <DockLabel />
    </div>
  );
}
